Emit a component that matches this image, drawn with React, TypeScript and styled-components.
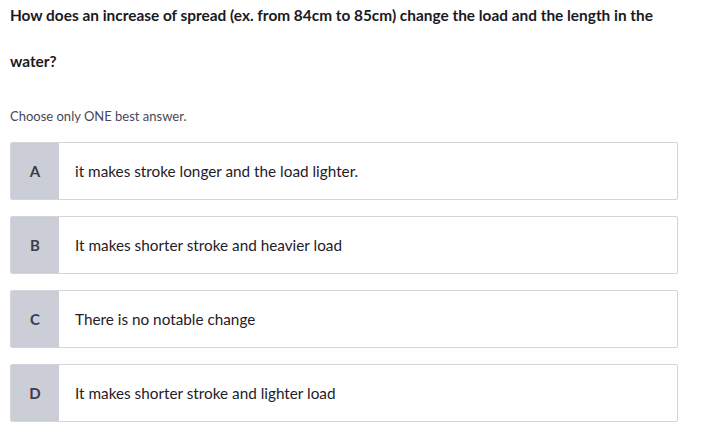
import styled, { createGlobalStyle } from "styled-components";

const GlobalStyle = createGlobalStyle`
    body {
        margin: 0;
        background: #ffffff;
        font-family: Lato, "Liberation Sans", sans-serif;
    }
`;

const options = [
    { letter: "A", text: "it makes stroke longer and the load lighter." },
    { letter: "B", text: "It makes shorter stroke and heavier load" },
    { letter: "C", text: "There is no notable change" },
    { letter: "D", text: "It makes shorter stroke and lighter load" },
];

export default function App() {
    return (
        <>
            <GlobalStyle />
            <QuizContainer>
                <Question>
                    How does an increase of spread (ex. from 84cm to 85cm) change the load and the length in the water?
                </Question>
                <Hint>Choose only ONE best answer.</Hint>
                <OptionList>
                    {options.map((o) => (
                        <OptionCard key={o.letter}>
                            <OptionLetter>{o.letter}</OptionLetter>
                            <OptionText>{o.text}</OptionText>
                        </OptionCard>
                    ))}
                </OptionList>
            </QuizContainer>
        </>
    );
}

const QuizContainer = styled.div`
    width: 668px;
    padding: 0 10px;
`;

const Question = styled.div`
    width: 660px;
    font-size: 15.4px;
    font-weight: 700;
    line-height: 46px;
    margin-top: -8px;
    color: #1a1a1f;
`;

const Hint = styled.div`
    margin-top: 23px;
    font-size: 13px;
    line-height: 18px;
    color: #464856;
`;

const OptionList = styled.div`
    display: grid;
    gap: 16px;
    margin-top: 17px;
`;

const OptionCard = styled.div`
    display: flex;
    height: 58px;
    border: 1px solid #d3d4dc;
    border-radius: 2px;
    overflow: hidden;
    box-sizing: border-box;
`;

const OptionLetter = styled.div`
    width: 48px;
    flex-shrink: 0;
    display: flex;
    align-items: center;
    justify-content: center;
    background: #cbcdd7;
    color: #3b3c4a;
    font-size: 15px;
    font-weight: 700;
`;

const OptionText = styled.div`
    display: flex;
    align-items: center;
    padding-left: 16px;
    font-size: 15.3px;
    color: #1f2029;
`;
